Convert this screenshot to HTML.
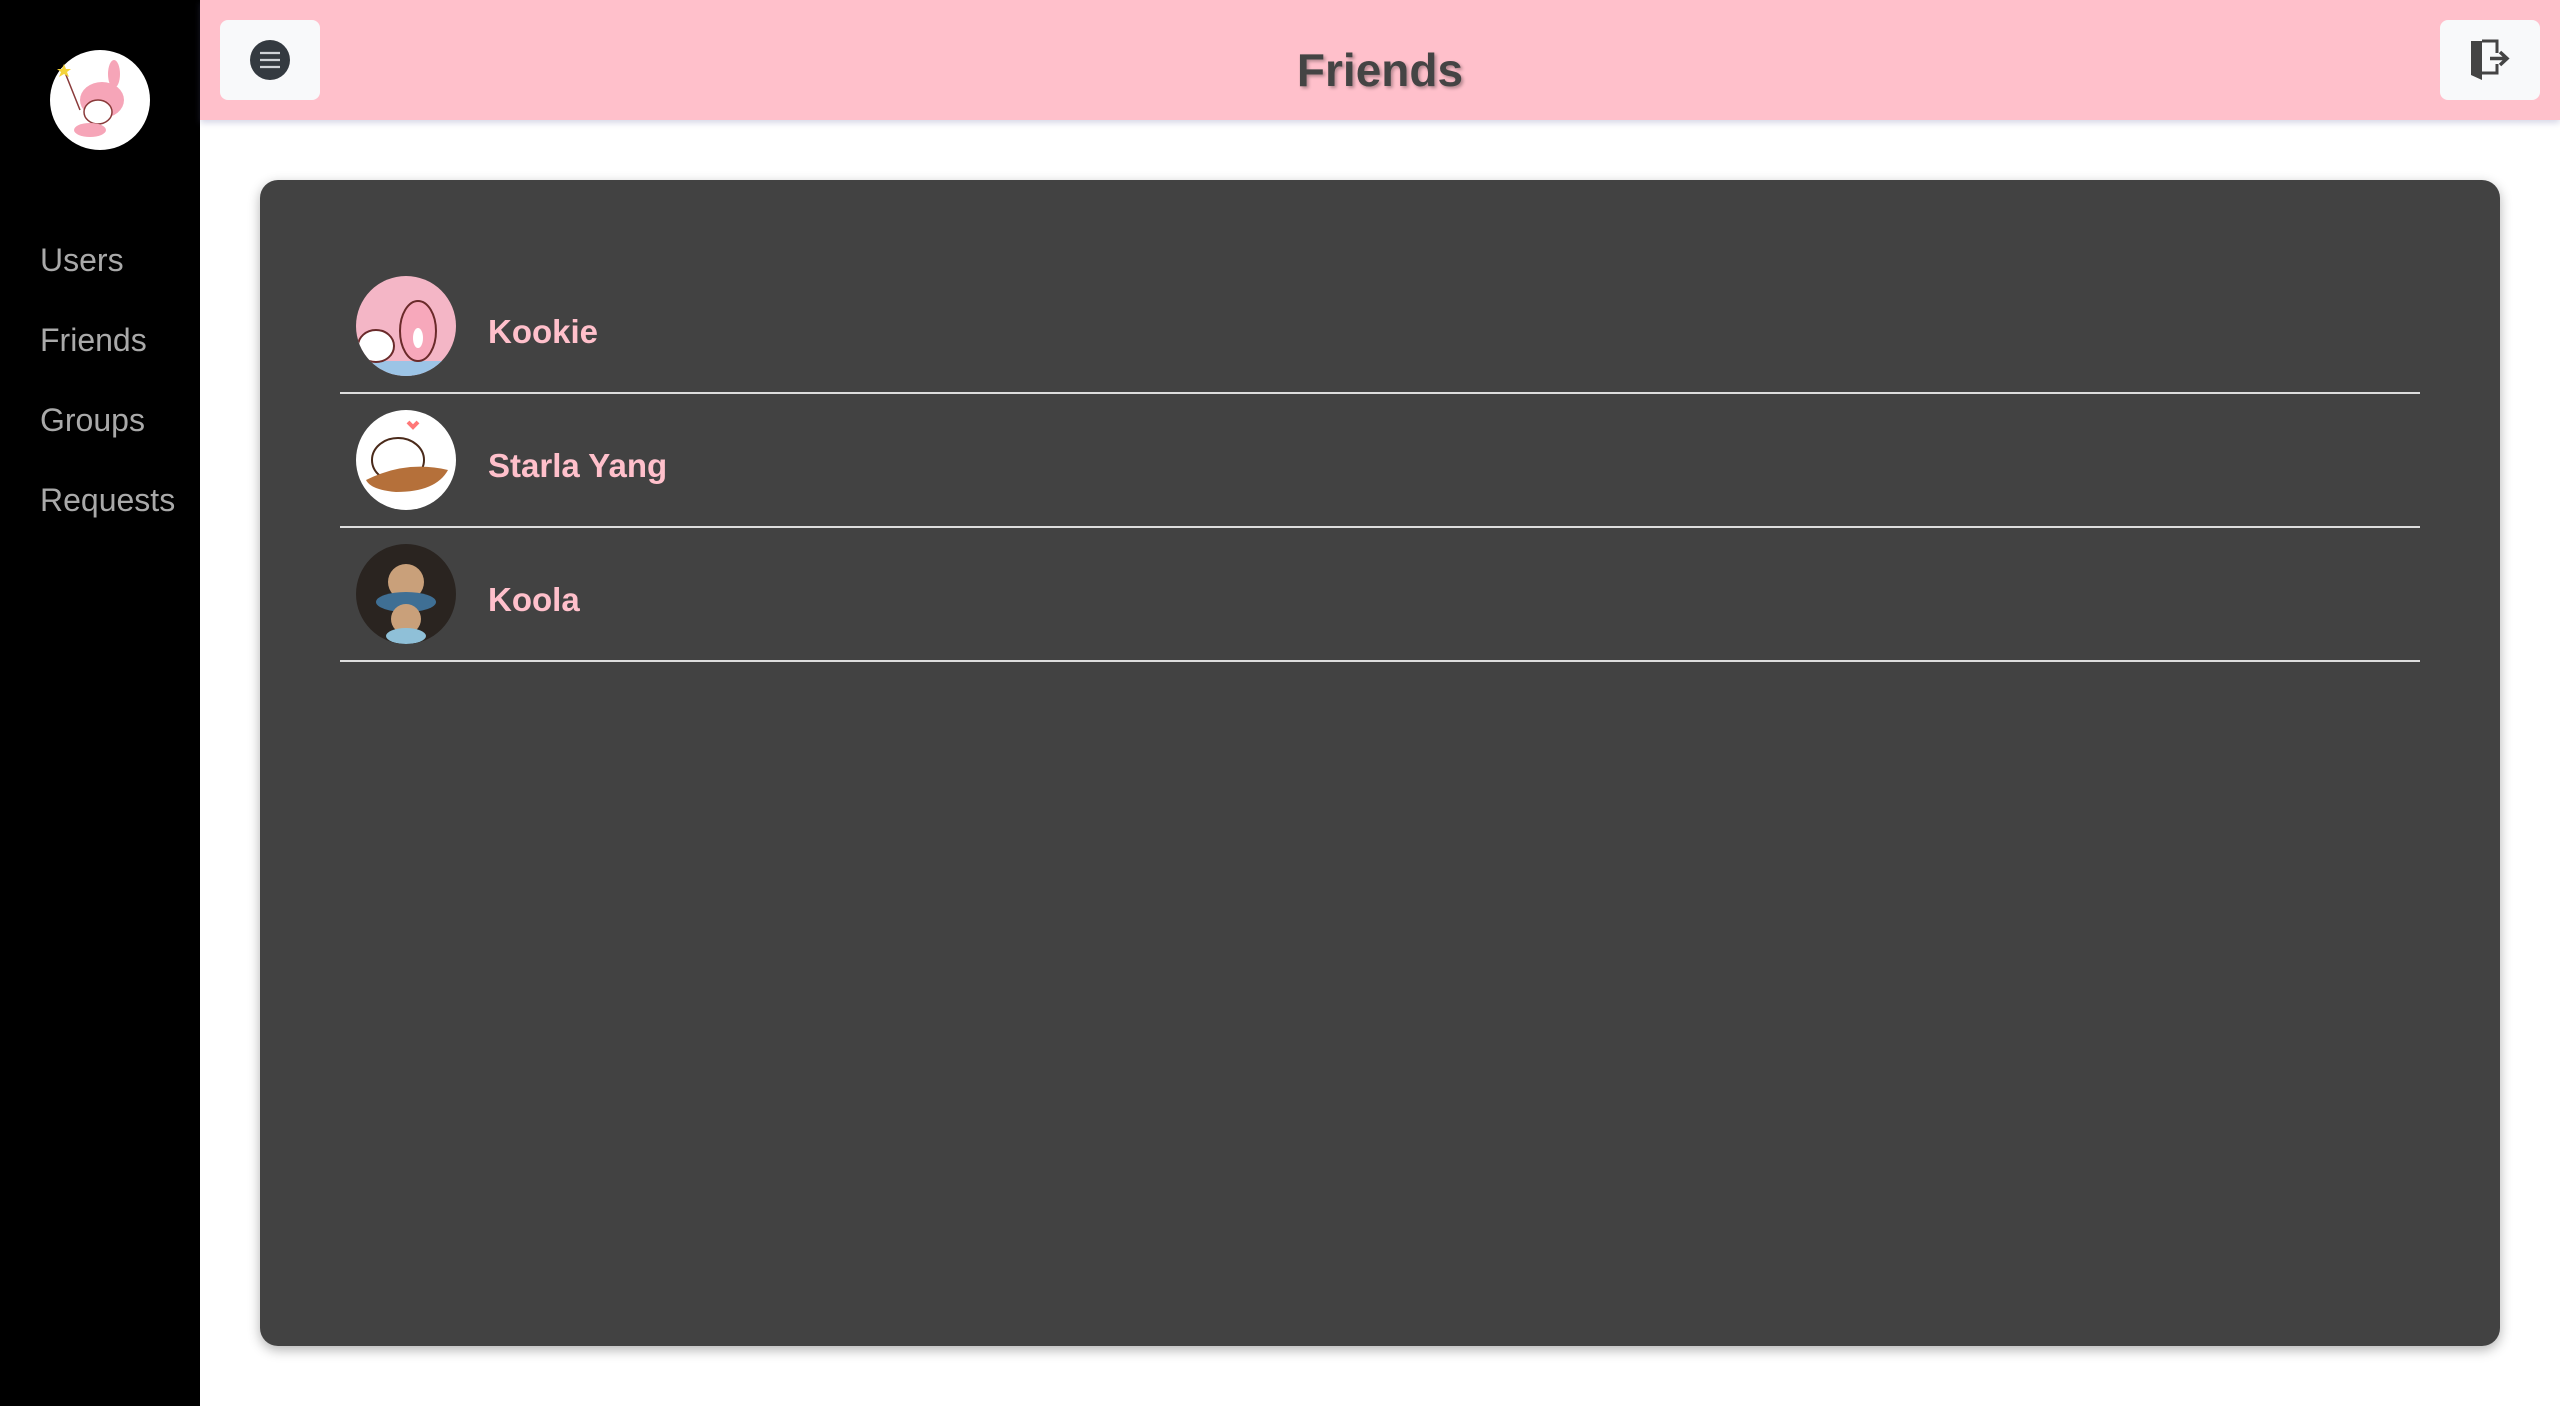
<!DOCTYPE html>
<html><head><meta charset="utf-8"><style>
*{box-sizing:border-box;margin:0;padding:0}
body{width:2560px;height:1406px;background:#fff;font-family:"Liberation Sans",sans-serif;position:relative;overflow:hidden}
.side{position:absolute;left:0;top:0;width:200px;height:1406px;background:#000}
.nav{position:absolute;left:40px;color:#a9a9a9;font-size:32px;line-height:40px}
.hdr{position:absolute;left:200px;top:0;width:2360px;height:120px;background:#ffc0cb;box-shadow:0 3px 6px rgba(100,100,160,.25)}
.btn{position:absolute;top:20px;width:100px;height:80px;background:#f8f9fa;border-radius:8px}
.title{position:absolute;left:0;width:100%;top:42px;text-align:center;font-size:46px;font-weight:bold;color:#444;text-shadow:2px 2px 3px rgba(0,0,0,.3);line-height:56px}
.card{position:absolute;left:260px;top:180px;width:2240px;height:1166px;background:#424242;border-radius:18px;box-shadow:0 4px 12px rgba(0,0,0,.3)}
.row{position:absolute;left:80px;width:2080px;height:134px;border-bottom:2px solid #ddd}
.av{position:absolute;left:16px;top:16px;width:100px;height:100px;border-radius:50%;overflow:hidden}
.nm{position:absolute;left:148px;top:52px;color:#ffc0cb;font-size:33px;font-weight:bold;line-height:40px}
</style></head><body>
<div class="side">
 <svg style="position:absolute;left:50px;top:50px" width="100" height="100" viewBox="0 0 100 100">
  <circle cx="50" cy="50" r="50" fill="#fff"/>
  <ellipse cx="52" cy="50" rx="22" ry="18" fill="#f6a5b8"/>
  <ellipse cx="64" cy="24" rx="6" ry="14" fill="#f6a5b8"/>
  <ellipse cx="48" cy="62" rx="14" ry="12" fill="#fff" stroke="#8a3a3a" stroke-width="1.5"/>
  <ellipse cx="40" cy="80" rx="16" ry="7" fill="#f6a5b8"/>
  <path d="M14 20 L30 60" stroke="#8a3a3a" stroke-width="1.5"/>
  <polygon points="14,14 16,19 21,19 17,22 19,27 14,24 9,27 11,22 7,19 12,19" fill="#f5d33a"/>
 </svg>
 <div class="nav" style="top:240px">Users</div>
 <div class="nav" style="top:320px">Friends</div>
 <div class="nav" style="top:400px">Groups</div>
 <div class="nav" style="top:480px">Requests</div>
</div>
<div class="hdr">
 <div class="title">Friends</div>
 <div class="btn" style="left:20px">
  <svg style="position:absolute;left:30px;top:20px" width="40" height="40" viewBox="0 0 40 40">
   <circle cx="20" cy="20" r="20" fill="#343a40"/>
   <path d="M10 13h20M10 20h20M10 27h20" stroke="#d0d4d8" stroke-width="2.2"/>
  </svg>
 </div>
 <div class="btn" style="left:2240px">
  <svg style="position:absolute;left:28px;top:18px" width="44" height="44" viewBox="0 0 44 44">
   <path d="M3 3 L14 3 L14 42 L3 37 Z" fill="#444"/>
   <path d="M14 3 H29 V15 M29 26 V35 H14" stroke="#444" stroke-width="3" fill="none"/>
   <path d="M22 20.5 H38 M32 14 L39 20.5 L32 27" stroke="#444" stroke-width="3.5" fill="none"/>
  </svg>
 </div>
</div>
<div class="card">
 <div class="row" style="top:80px">
  <div class="av"><svg width="100" height="100"><rect width="100" height="100" fill="#f4b6c6"/><rect y="85" width="100" height="15" fill="#9cc4e6"/><ellipse cx="62" cy="55" rx="18" ry="30" fill="#f7a8bb" stroke="#6a2a2a" stroke-width="2"/><ellipse cx="62" cy="62" rx="5" ry="10" fill="#fff"/><ellipse cx="20" cy="70" rx="18" ry="16" fill="#fff" stroke="#6a2a2a" stroke-width="2"/></svg></div>
  <div class="nm">Kookie</div>
 </div>
 <div class="row" style="top:214px">
  <div class="av"><svg width="100" height="100"><rect width="100" height="100" fill="#fff"/><ellipse cx="42" cy="50" rx="26" ry="22" fill="#fff" stroke="#4a2a1a" stroke-width="2"/><path d="M10 70 Q50 50 92 60 Q80 82 40 82 Q15 80 10 70Z" fill="#b5703a"/><path d="M52 12 l5 5 5 -5" stroke="#f77" stroke-width="4" fill="none"/></svg></div>
  <div class="nm">Starla Yang</div>
 </div>
 <div class="row" style="top:348px">
  <div class="av"><svg width="100" height="100"><rect width="100" height="100" fill="#2a2420"/><circle cx="50" cy="38" r="18" fill="#c9a07a"/><ellipse cx="50" cy="58" rx="30" ry="10" fill="#3f6f94"/><circle cx="50" cy="75" r="15" fill="#c9a07a"/><ellipse cx="50" cy="92" rx="20" ry="8" fill="#8fc0d8"/></svg></div>
  <div class="nm">Koola</div>
 </div>
</div>
</body></html>
